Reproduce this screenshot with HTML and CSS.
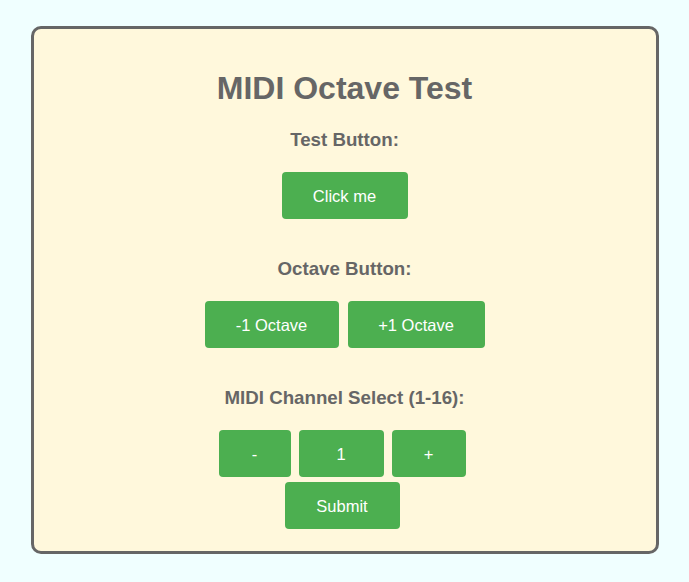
FILE: index.html
```html
<!DOCTYPE html>
<html>
<head>
<meta charset="utf-8">
<link rel="stylesheet" href="styles.css">
</head>
<body>
<div class="card">
  <h1 class="title">MIDI Octave Test</h1>
  <h2 class="label">Test Button:</h2>
  <div class="row">
    <button class="btn w-click">Click me</button>
  </div>
  <h2 class="label gap-top">Octave Button:</h2>
  <div class="row gap9">
    <button class="btn w-down">-1 Octave</button>
    <button class="btn w-up">+1 Octave</button>
  </div>
  <h2 class="label gap-top">MIDI Channel Select (1-16):</h2>
  <div class="row gap8 shift">
    <button class="btn w-minus">-</button>
    <button class="btn w-num">1</button>
    <button class="btn w-plus">+</button>
  </div>
  <div class="row shift small-top">
    <button class="btn w-submit">Submit</button>
  </div>
</div>
</body>
</html>
```
FILE: styles.css
```css
html, body {
  margin: 0;
  padding: 0;
  background: #f0ffff;
  font-family: "Liberation Sans", Arial, sans-serif;
}
body {
  padding-top: 26px;
}
.card {
  width: 628px;
  height: 528px;
  box-sizing: border-box;
  margin: 0 auto;
  background: #fff8dc;
  border: 3px solid #666;
  border-radius: 10px;
  padding: 41px 0 22px;
  display: flex;
  flex-direction: column;
  align-items: center;
  color: #666;
}
.title {
  margin: 0;
  font-size: 32px;
  line-height: 36px;
  font-weight: bold;
}
.label {
  margin: 23px 0 0;
  font-size: 18.72px;
  line-height: 22px;
  font-weight: bold;
}
.label.gap-top {
  margin-top: 39px;
}
.row {
  display: flex;
  justify-content: center;
  margin-top: 21px;
}
.row.small-top {
  margin-top: 5px;
}
.row.gap9 { gap: 9px; }
.row.gap8 { gap: 8px; }
.row.shift { padding-right: 5px; }
.btn {
  height: 47px;
  border: none;
  border-radius: 4px;
  background: #4caf50;
  color: #fff;
  font-family: "Liberation Sans", Arial, sans-serif;
  font-size: 16.5px;
  padding: 1px 0 0;
  margin: 0;
}
.w-click { width: 126px; }
.w-down { width: 134px; }
.w-up { width: 137px; }
.w-minus { width: 72px; }
.w-num { width: 85px; }
.w-plus { width: 74px; }
.w-submit { width: 115px; }
```
